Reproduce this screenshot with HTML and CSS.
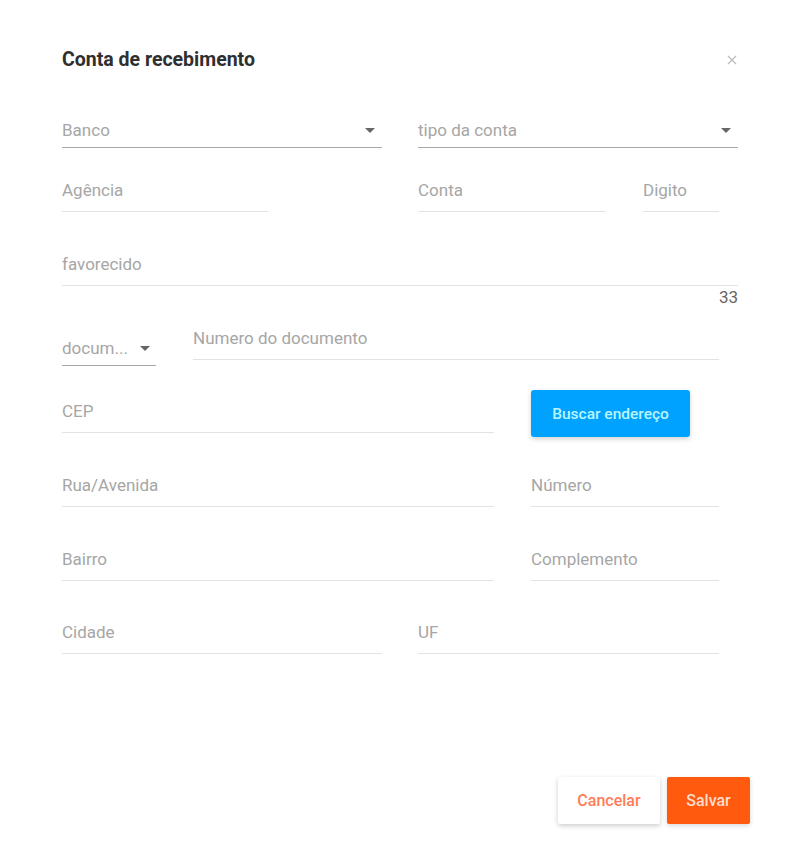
FILE: index.html
```html
<!DOCTYPE html>
<html lang="pt-BR">
<head>
<meta charset="utf-8">
<title>Conta de recebimento</title>
<link rel="stylesheet" href="styles.css">
</head>
<body>
<div class="dialog">
  <header class="dialog-header">
    <h1 class="dialog-title">Conta de recebimento</h1>
    <button class="close" aria-label="Fechar">
      <svg width="10" height="10" viewBox="0 0 10 10"><path d="M1 1L9 9M9 1L1 9" stroke="#bdbdbd" stroke-width="1.3" fill="none"/></svg>
    </button>
  </header>

  <div class="form">
    <div class="row row-1">
      <div class="select w-320"><span class="label">Banco</span><span class="caret"></span></div>
      <div class="select w-320"><span class="label">tipo da conta</span><span class="caret"></span></div>
    </div>

    <div class="row row-2">
      <div class="field w-206"><span class="label">Agência</span></div>
      <div class="field w-188 gap-150"><span class="label">Conta</span></div>
      <div class="field w-76"><span class="label">Digito</span></div>
    </div>

    <div class="row row-3">
      <div class="field w-676"><span class="label">favorecido</span></div>
    </div>
    <div class="counter w-676">33</div>

    <div class="row row-4">
      <div class="select select-doc w-94"><span class="label">docum...</span><span class="caret"></span></div>
      <div class="field w-526"><span class="label">Numero do documento</span></div>
    </div>

    <div class="row row-5">
      <div class="field field-cep w-432"><span class="label">CEP</span></div>
      <button class="btn-primary">Buscar endereço</button>
    </div>

    <div class="row row-6">
      <div class="field w-432"><span class="label">Rua/Avenida</span></div>
      <div class="field w-188"><span class="label">Número</span></div>
    </div>

    <div class="row row-7">
      <div class="field w-432"><span class="label">Bairro</span></div>
      <div class="field w-188"><span class="label">Complemento</span></div>
    </div>

    <div class="row row-8">
      <div class="field w-320"><span class="label">Cidade</span></div>
      <div class="field w-301"><span class="label">UF</span></div>
    </div>
  </div>

  <footer class="dialog-footer">
    <button class="btn-cancel">Cancelar</button>
    <button class="btn-save">Salvar</button>
  </footer>
</div>
</body>
</html>
```

FILE: styles.css
```css
* { box-sizing: border-box; }

html, body {
  margin: 0;
  padding: 0;
  background: #ffffff;
}

body {
  font-family: Roboto, "Liberation Sans", Arial, sans-serif;
  color: #333;
}

.dialog {
  width: 795px;
  height: 867px;
  padding-left: 62px;
}

.dialog-header {
  width: 676px;
  padding-top: 48px;
  display: flex;
  align-items: center;
  justify-content: space-between;
}

.dialog-title {
  margin: 0;
  font-size: 19.5px;
  line-height: 24px;
  font-weight: 700;
  color: #2f2f2f;
}

.close {
  border: 0;
  background: none;
  padding: 0;
  margin-right: 1px;
  width: 10px;
  height: 10px;
  display: flex;
}

.form {
  display: flex;
  flex-direction: column;
}

.row {
  display: flex;
  align-items: flex-start;
  gap: 37px;
}

.row-1 { margin-top: 48px; gap: 36px; }
.row-2 { margin-top: 32px; }
.row-3 { margin-top: 42px; }
.row-4 { margin-top: 23px; }
.row-5 { margin-top: 24px; }
.row-6 { margin-top: 38px; }
.row-7 { margin-top: 42px; }
.row-8 { margin-top: 41px; gap: 36px; }

.label {
  font-size: 17px;
  line-height: 20px;
  color: #a6a6a6;
  white-space: nowrap;
}

.field {
  padding-bottom: 11px;
  border-bottom: 1px solid #e3e3e3;
  line-height: 20px;
  height: 32px;
}

.field-cep { margin-top: 11px; }

.select {
  display: flex;
  align-items: center;
  justify-content: space-between;
  height: 28px;
  padding-bottom: 7px;
  padding-right: 7px;
  border-bottom: 1px solid #a8a8a8;
}

.select-doc { margin-top: 10px; padding-right: 6px; }

.caret {
  width: 0;
  height: 0;
  border-left: 5px solid transparent;
  border-right: 5px solid transparent;
  border-top: 5px solid #666;
  margin-top: 1px;
}

.counter {
  margin-top: 3px;
  text-align: right;
  font-size: 17px;
  line-height: 16px;
  color: #666;
}

.gap-150 { margin-left: 113px; }

.w-76 { width: 76px; }
.w-94 { width: 94px; }
.w-188 { width: 188px; }
.w-206 { width: 206px; }
.w-301 { width: 301px; }
.w-320 { width: 320px; }
.w-432 { width: 432px; }
.w-526 { width: 526px; }
.w-676 { width: 676px; }

button {
  font-family: Roboto, "Liberation Sans", Arial, sans-serif;
  cursor: pointer;
}

.btn-primary {
  width: 159px;
  height: 47px;
  border: 0;
  border-radius: 3px;
  background: #00a2ff;
  color: #b8f6ff;
  font-size: 15.5px;
  font-weight: 500;
  box-shadow: 0 2px 5px rgba(0, 0, 0, 0.18);
}

.dialog-footer {
  margin-top: 123px;
  width: 688px;
  display: flex;
  justify-content: flex-end;
  gap: 7px;
}

.btn-cancel {
  width: 102px;
  height: 47px;
  border: 0;
  border-radius: 2px;
  background: #ffffff;
  color: #ff7c57;
  font-size: 16px;
  font-weight: 500;
  box-shadow: 0 2px 5px rgba(0, 0, 0, 0.2);
}

.btn-save {
  width: 83px;
  height: 47px;
  border: 0;
  border-radius: 2px;
  background: #ff5a0d;
  color: #ffdccb;
  font-size: 16px;
  font-weight: 500;
  box-shadow: 0 2px 5px rgba(0, 0, 0, 0.15);
}
```
